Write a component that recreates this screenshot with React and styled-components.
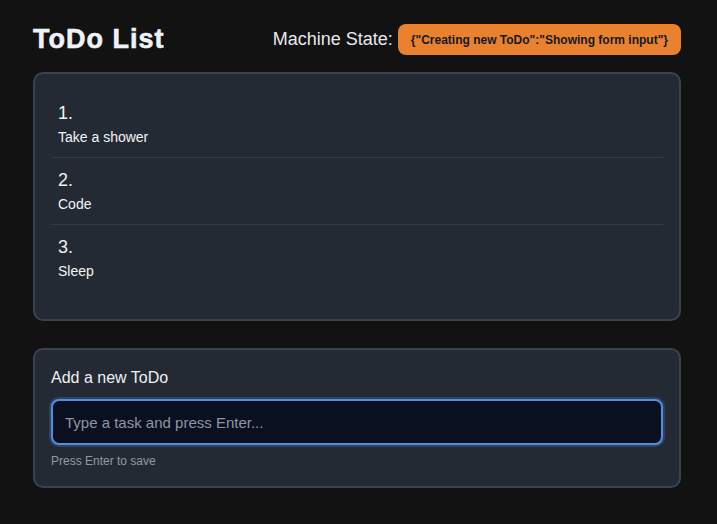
import React from "react";
import styled, { createGlobalStyle } from "styled-components";

const GlobalStyle = createGlobalStyle`
  html, body {
    margin: 0;
    padding: 0;
    background: #121212;
  }
  body {
    font-family: "Liberation Sans", Arial, sans-serif;
    color: #e8ebf0;
  }
`;

const Page = styled.div`
  padding: 24px 36px 30px 33px;
`;

const Header = styled.header`
  display: flex;
  align-items: center;
  justify-content: space-between;
  height: 31px;
  margin-bottom: 17px;
`;

const Title = styled.h1`
  margin: 0;
  font-size: 27px;
  font-weight: 700;
  letter-spacing: 1px;
  color: #eef1f6;
  -webkit-text-stroke: 0.6px #eef1f6;
`;

const StateWrap = styled.div`
  display: flex;
  align-items: center;
  gap: 5px;
  font-size: 18px;
  color: #e6e9ee;
`;

const Badge = styled.span`
  display: inline-flex;
  align-items: center;
  height: 31px;
  padding: 0 13px;
  border-radius: 8px;
  background: #ea812e;
  color: #141a24;
  font-size: 12px;
  font-weight: 700;
`;

const Card = styled.section`
  background: #242a33;
  border: 2px solid #3b424e;
  border-radius: 10px;
  padding: ${(p) => p.$pad};
`;

const List = styled.ol`
  list-style: none;
  margin: 0;
  padding: 0;
`;

const Item = styled.li`
  padding: 11px 7px;
  border-bottom: 1px solid #343b47;
  &:last-child {
    border-bottom: none;
  }
`;

const Num = styled.div`
  font-size: 18px;
  line-height: 22px;
  margin-bottom: 4px;
  color: #eef1f5;
`;

const Task = styled.div`
  font-size: 14px;
  line-height: 18px;
  color: #f2f4f7;
`;

const Gap = styled.div`
  height: 27px;
`;

const FormTitle = styled.h2`
  margin: 0 0 9px;
  font-size: 16px;
  line-height: 24px;
  font-weight: 400;
  color: #eef1f5;
`;

const Input = styled.input`
  display: block;
  box-sizing: border-box;
  width: 100%;
  height: 46px;
  padding: 0 12px;
  border: 2px solid #4f8fe3;
  border-radius: 8px;
  background: #0a1020;
  color: #e8ebf0;
  caret-color: #e8ebf0;
  font-family: "Liberation Sans", Arial, sans-serif;
  font-size: 15px;
  outline: none;
  box-shadow: 0 0 0 2px rgba(79, 143, 227, 0.25);
  &::placeholder {
    color: #8e96a4;
  }
`;

const Hint = styled.div`
  margin-top: 8px;
  font-size: 12px;
  line-height: 16px;
  color: #9199a6;
`;

const todos = ["Take a shower", "Code", "Sleep"];

export default function App() {
  return (
    <>
      <GlobalStyle />
      <Page>
        <Header>
          <Title>ToDo List</Title>
          <StateWrap>
            Machine State:
            <Badge>{'{"Creating new ToDo":"Showing form input"}'}</Badge>
          </StateWrap>
        </Header>

        <Card $pad="17px 16px 28px">
          <List>
            {todos.map((t, i) => (
              <Item key={t}>
                <Num>{i + 1}.</Num>
                <Task>{t}</Task>
              </Item>
            ))}
          </List>
        </Card>

        <Gap />

        <Card $pad="16px 16px 17px">
          <FormTitle>Add a new ToDo</FormTitle>
          <Input autoFocus placeholder="Type a task and press Enter..." />
          <Hint>Press Enter to save</Hint>
        </Card>
      </Page>
    </>
  );
}
